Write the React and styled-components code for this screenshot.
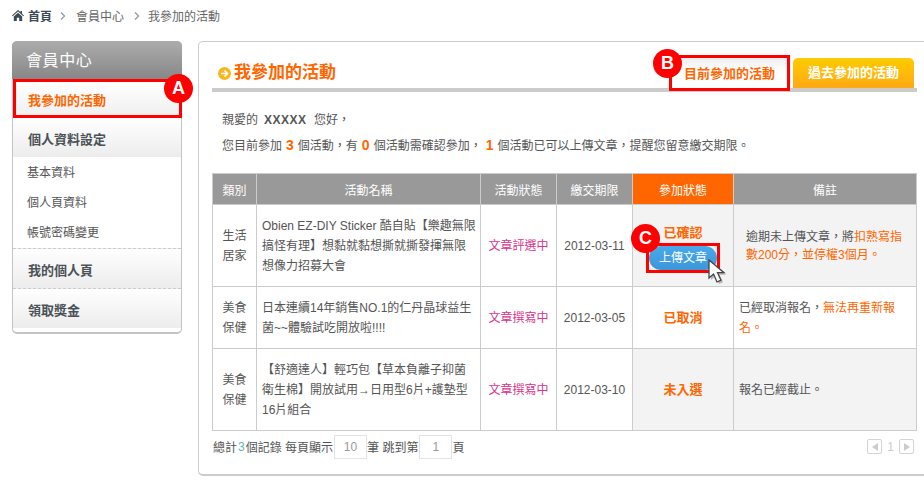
import React from "react";
import styled, { createGlobalStyle } from "styled-components";

const GlobalStyle = createGlobalStyle`
  html, body {
    margin: 0;
    padding: 0;
    background: #fff;
    overflow: hidden;
  }
  body {
    font-family: "Liberation Sans", "Noto Sans CJK TC", sans-serif;
    font-size: 12px;
    color: #555;
  }
`;

const Page = styled.div`
  width: 924px;
  height: 485px;
  overflow: hidden;
`;

const Breadcrumb = styled.div`
  display: flex;
  align-items: center;
  height: 32px;
  padding: 0 0 1px 12px;
  box-sizing: border-box;
  color: #666;
`;

const Home = styled.a`
  display: flex;
  align-items: center;
  gap: 4px;
  font-weight: bold;
  color: #3c4a55;
`;

const Crumb = styled.span`
  display: flex;
  align-items: center;
  gap: ${(p) => p.$gap || 8}px;
  margin-left: ${(p) => p.$left || 8}px;
`;

const Columns = styled.div`
  display: flex;
  align-items: flex-start;
  gap: 16px;
  padding: 9px 0 0 12px;
`;

const Sidebar = styled.aside`
  position: relative;
  flex: none;
  width: 170px;
  height: 293px;
  box-sizing: border-box;
  border: 1px solid #c4c4c4;
  border-top: 0;
  border-bottom-width: 2px;
  border-radius: 5px;
`;

const SideTitle = styled.div`
  height: 38px;
  margin: 0 -1px;
  padding-left: 14px;
  border-radius: 5px 5px 0 0;
  background: linear-gradient(#acacac, #878787);
  color: #fff;
  font-size: 16px;
  letter-spacing: 0.6px;
  line-height: 40px;
`;

const ActiveItem = styled.div`
  position: relative;
  height: 39px;
  box-sizing: border-box;
  margin-right: -1px;
  border: 3px solid #f00;
  padding-left: 12px;
  background: linear-gradient(#fff, #f0f0f0);
  color: #f60;
  font-weight: bold;
  font-size: 13px;
  line-height: 37px;
`;

const Section = styled.div`
  height: 39px;
  padding-left: 15px;
  background: linear-gradient(#fff, #ececec);
  border-top: ${(p) => (p.$dashed ? "1px dashed #ccc" : "0")};
  color: #4a5257;
  font-weight: bold;
  font-size: 13px;
  line-height: 43px;
`;

const SubItem = styled.div`
  height: 30px;
  padding-left: 14px;
  color: #555;
  line-height: 32px;
`;

const SubList = styled.div`
  height: 91px;
`;

const Badge = styled.span`
  position: absolute;
  left: ${(p) => p.$x}px;
  top: ${(p) => p.$y}px;
  width: 29px;
  height: 29px;
  border-radius: 50%;
  background: #f00;
  color: #fff;
  font-size: 18px;
  font-weight: bold;
  line-height: 29px;
  text-align: center;
  z-index: 3;
`;

const Panel = styled.main`
  flex: none;
  width: 760px;
  height: 435px;
  box-sizing: border-box;
  padding: 0 0 0 13px;
  border: 1px solid #ccc;
  border-bottom-width: 2px;
  border-radius: 5px;
`;

const Content = styled.div`
  width: 705px;
`;

const TitleBar = styled.div`
  position: relative;
  display: flex;
  align-items: flex-end;
  justify-content: space-between;
  height: 46px;
  border-bottom: 4px solid #ccc;
`;

const Heading = styled.h2`
  display: flex;
  align-items: center;
  gap: 3px;
  margin: 0 0 3px 6px;
  color: #f60;
  font-size: 17px;
  font-weight: bold;
  line-height: 24px;
`;

const Tabs = styled.div`
  display: flex;
  align-items: flex-start;
  gap: 3px;
  margin: 0 3px -3px 0;
`;

const CurrentTab = styled.div`
  position: relative;
  width: 121px;
  height: 36px;
  box-sizing: border-box;
  border: 3px solid #f00;
  background: linear-gradient(#eee, #fff 45%);
  color: #f60;
  font-size: 13px;
  font-weight: bold;
  line-height: 31px;
  text-align: center;
`;

const PastTab = styled.div`
  width: 121px;
  height: 30px;
  margin-top: 3px;
  border-radius: 5px 5px 0 0;
  background: linear-gradient(#ffcc00, #ffa914);
  color: #fff;
  font-size: 13px;
  font-weight: bold;
  line-height: 30px;
  text-align: center;
`;

const Intro = styled.div`
  padding: 15px 0 0 10px;
  height: 66px;
`;

const IntroLine = styled.p`
  margin: 0;
  height: 26px;
  line-height: 26px;
  color: #555;
`;

const Count = styled.b`
  margin: 0 4px;
  color: #f60;
  font-size: 14px;
  line-height: 1;
`;

const Name = styled.b`
  margin: 0 4px 0 6px;
  font-weight: bold;
  letter-spacing: 0.5px;
`;

const Table = styled.table`
  width: 704px;
  table-layout: fixed;
  border-collapse: collapse;
  font-size: 12px;
`;

const Th = styled.th`
  height: 30px;
  padding: 0;
  border: 1px solid #ccc;
  background: ${(p) => (p.$hot ? "#f60" : "#999")};
  color: #fff;
  font-weight: normal;
  text-align: center;
`;

const Row = styled.tr`
  height: ${(p) => p.$height}px;
`;

const Td = styled.td`
  padding: 0 ${(p) => p.$pad || 0}px;
  border: 1px solid #ccc;
  background: ${(p) => (p.$shade ? "#f3f3f3" : "#fff")};
  color: #555;
  line-height: ${(p) => p.$lh || 20}px;
  text-align: ${(p) => (p.$center ? "center" : "left")};
  white-space: nowrap;
`;

const Stage = styled.span`
  color: #d9348a;
`;

const State = styled.div`
  color: #f60;
  font-size: 13px;
  font-weight: bold;
`;

const Warn = styled.span`
  color: #f60;
`;

const UploadCell = styled.div`
  position: relative;
  display: flex;
  flex-direction: column;
  align-items: center;
  padding-top: 5px;
`;

const UploadFrame = styled.div`
  display: flex;
  width: 74px;
  height: 30px;
  box-sizing: border-box;
  border: 3px solid #f00;
`;

const UploadButton = styled.div`
  width: 100%;
  border-radius: 12px;
  background: linear-gradient(#49a9ea, #3b97da);
  color: #fff;
  line-height: 24px;
  text-align: center;
`;

const Cursor = styled.svg`
  position: absolute;
  left: 74px;
  top: 41px;
  z-index: 4;
`;

const Footer = styled.div`
  display: flex;
  align-items: center;
  justify-content: space-between;
  height: 31px;
  padding: 0 1px;
  color: #555;
`;

const FooterLeft = styled.div`
  display: flex;
  align-items: center;
`;

const Total = styled.span`
  padding: 0 1px;
  color: #5fb6c6;
`;

const PageInput = styled.span`
  display: block;
  width: 31px;
  height: 22px;
  margin-left: 1px;
  border: 1px solid #e4e4e4;
  color: #999;
  line-height: 22px;
  text-align: center;
`;

const Pager = styled.div`
  display: flex;
  align-items: center;
  gap: 5px;
  margin-right: 2px;
  color: #ccc;
`;

const PagerButton = styled.span`
  display: flex;
  align-items: center;
  justify-content: center;
  width: 13px;
  height: 13px;
  border: 1px solid #d4d4d4;
  border-radius: 2px;
`;

const Triangle = styled.i`
  width: 0;
  height: 0;
  border-top: 4px solid transparent;
  border-bottom: 4px solid transparent;
  border-${(p) => (p.$prev ? "right" : "left")}: 6px solid #ccc;
`;

const Chevron = () => (
  <svg width="6" height="8" viewBox="0 0 6 8" fill="none" stroke="#999" strokeWidth="1.3">
    <path d="M1 .5 4.5 4 1 7.5" />
  </svg>
);

const HomeIcon = () => (
  <svg width="12" height="11" viewBox="0 0 12 11" fill="#3c4a55">
    <path d="M6 0 0 5.6l.7.7L6 1.5l5.300 4.800.7-.7-2-1.900V1H8.500v1.200zM1.800 6.400V11h3V7.800h2.400V11h3V6.400L6 2.700z" />
  </svg>
);

const GoIcon = () => (
  <svg width="13" height="13" viewBox="0 0 13 13">
    <circle cx="6.500" cy="6.500" r="6.500" fill="#f6b81f" />
    <path d="M3 6.500h6M6.500 3.500l3 3-3 3" fill="none" stroke="#fff" strokeWidth="1.600" />
  </svg>
);

const rows = [
  {
    kind: ["生活", "居家"],
    title: ["Obien EZ-DIY Sticker 酷自貼【樂趣無限", "搞怪有理】想黏就黏想撕就撕發揮無限", "想像力招募大會"],
    stage: "文章評選中",
    date: "2012-03-11",
  },
  {
    kind: ["美食", "保健"],
    title: ["日本連續14年銷售NO.1的仁丹晶球益生", "菌~~體驗試吃開放啦!!!!"],
    stage: "文章撰寫中",
    date: "2012-03-05",
  },
  {
    kind: ["美食", "保健"],
    title: ["【舒適達人】輕巧包【草本負離子抑菌", "衛生棉】開放試用→日用型6片+護墊型", "16片組合"],
    stage: "文章撰寫中",
    date: "2012-03-10",
  },
];

const lines = (items) =>
  items.map((line, i) => (
    <React.Fragment key={line}>
      {i > 0 && <br />}
      {line}
    </React.Fragment>
  ));

const stateCells = [
  <Td $shade $center key="state">
    <UploadCell>
      <State>已確認</State>
      <UploadFrame>
        <UploadButton>上傳文章</UploadButton>
      </UploadFrame>
      <Badge $x={-2} $y={6}>C</Badge>
      <Cursor width="22" height="26" viewBox="0 0 22 26">
        <path d="M2 1v18l4.500-4 3.500 8 4-1.800-3.500-7.500H17z" fill="#000" opacity=".25" transform="translate(2 2)" />
        <path d="M2 1v18l4.500-4 3.500 8 4-1.800-3.500-7.500H17z" fill="#fff" stroke="#444" strokeWidth="1.300" />
      </Cursor>
    </UploadCell>
  </Td>,
  <Td $center key="cancel"><State>已取消</State></Td>,
  <Td $shade $center key="out"><State>未入選</State></Td>,
];

const noteCells = [
  <Td $shade $pad={12} $lh={18} key="n1">
    逾期未上傳文章，將<Warn>扣熟寫指<br />數200分，並停權3個月。</Warn>
  </Td>,
  <Td $pad={5} key="n2">
    已經取消報名，<Warn>無法再重新報<br />名。</Warn>
  </Td>,
  <Td $shade $pad={5} key="n3">報名已經截止。</Td>,
];

export default function App() {
  return (
    <Page>
      <GlobalStyle />
      <Breadcrumb>
        <Home><HomeIcon />首頁</Home>
        <Crumb $gap={10}><Chevron />會員中心</Crumb>
        <Crumb $gap={8} $left={10}><Chevron />我參加的活動</Crumb>
      </Breadcrumb>
      <Columns>
        <Sidebar>
          <SideTitle>會員中心</SideTitle>
          <ActiveItem>我參加的活動</ActiveItem>
          <Badge $x={151} $y={33}>A</Badge>
          <Section>個人資料設定</Section>
          <SubList>
            <SubItem>基本資料</SubItem>
            <SubItem>個人頁資料</SubItem>
            <SubItem>帳號密碼變更</SubItem>
          </SubList>
          <Section $dashed>我的個人頁</Section>
          <Section $dashed>領取獎金</Section>
        </Sidebar>
        <Panel>
          <Content>
            <TitleBar>
              <Heading><GoIcon />我參加的活動</Heading>
              <Tabs>
                <CurrentTab>
                  目前參加的活動
                  <Badge $x={-19} $y={-9}>B</Badge>
                </CurrentTab>
                <PastTab>過去參加的活動</PastTab>
              </Tabs>
            </TitleBar>
            <Intro>
              <IntroLine>親愛的<Name>XXXXX</Name> 您好，</IntroLine>
              <IntroLine>
                您目前參加<Count>3</Count>個活動，有<Count>0</Count>個活動需確認參加，
                <Count>1</Count>個活動已可以上傳文章，提醒您留意繳交期限。
              </IntroLine>
            </Intro>
            <Table>
              <colgroup>
                <col width="44" />
                <col width="224" />
                <col width="76" />
                <col width="76" />
                <col width="101" />
                <col width="183" />
              </colgroup>
              <thead>
                <tr>
                  <Th>類別</Th>
                  <Th>活動名稱</Th>
                  <Th>活動狀態</Th>
                  <Th>繳交期限</Th>
                  <Th $hot>參加狀態</Th>
                  <Th>備註</Th>
                </tr>
              </thead>
              <tbody>
                {rows.map((row, i) => (
                  <Row key={row.date} $height={[82, 62, 82][i]}>
                    <Td $center>{lines(row.kind)}</Td>
                    <Td $pad={5}>{lines(row.title)}</Td>
                    <Td $center><Stage>{row.stage}</Stage></Td>
                    <Td $center>{row.date}</Td>
                    {stateCells[i]}
                    {noteCells[i]}
                  </Row>
                ))}
              </tbody>
            </Table>
            <Footer>
              <FooterLeft>
                總計<Total>3</Total>個記錄&nbsp;每頁顯示
                <PageInput>10</PageInput>
                筆&nbsp;跳到第
                <PageInput>1</PageInput>
                頁
              </FooterLeft>
              <Pager>
                <PagerButton><Triangle $prev /></PagerButton>
                1
                <PagerButton><Triangle /></PagerButton>
              </Pager>
            </Footer>
          </Content>
        </Panel>
      </Columns>
    </Page>
  );
}
